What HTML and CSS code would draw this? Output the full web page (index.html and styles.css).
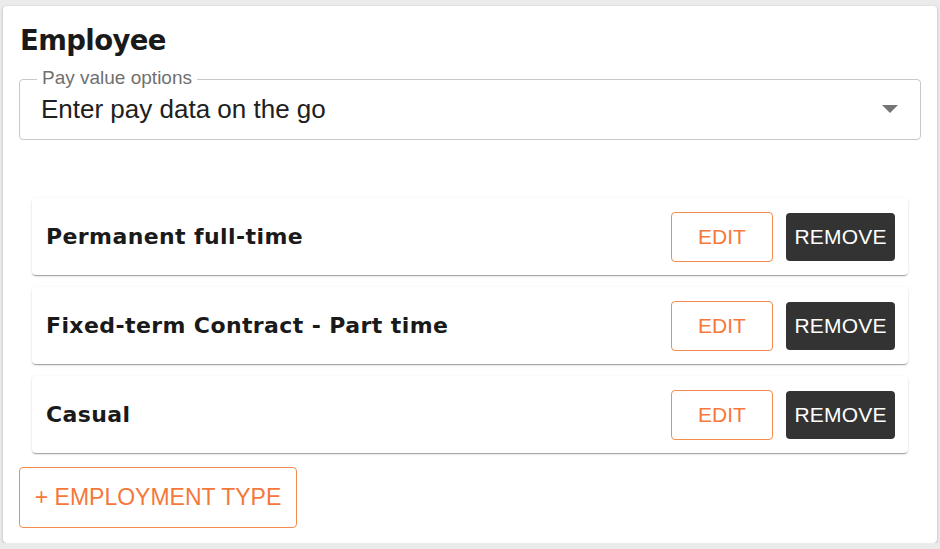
FILE: index.html
```html
<!DOCTYPE html>
<html>
<head>
<meta charset="utf-8">
<link rel="stylesheet" href="styles.css">
</head>
<body>
<div class="card">
  <h1 class="title">Employee</h1>
  <div class="select">
    <span class="select-label">Pay value options</span>
    <span class="select-value">Enter pay data on the go</span>
    <svg class="select-arrow" width="16" height="8" viewBox="0 0 16 8"><path d="M0 0 L8 8 L16 0 Z" fill="#757575"/></svg>
  </div>
  <div class="rows">
    <div class="row">
      <span class="row-name">Permanent full-time</span>
      <div class="actions"><button class="btn-edit">EDIT</button><button class="btn-remove">REMOVE</button></div>
    </div>
    <div class="row">
      <span class="row-name">Fixed-term Contract - Part time</span>
      <div class="actions"><button class="btn-edit">EDIT</button><button class="btn-remove">REMOVE</button></div>
    </div>
    <div class="row">
      <span class="row-name">Casual</span>
      <div class="actions"><button class="btn-edit">EDIT</button><button class="btn-remove">REMOVE</button></div>
    </div>
  </div>
  <button class="btn-add">+ EMPLOYMENT TYPE</button>
</div>
</body>
</html>
```
FILE: styles.css
```css
html, body { margin: 0; padding: 0; }
body {
  background: #ebebeb;
  padding: 6px 3px 0 3px;
  font-family: "Liberation Sans", Arial, sans-serif;
}
.card {
  width: 934px;
  height: 537px;
  box-sizing: border-box;
  background: #fff;
  border-radius: 4px;
  box-shadow: 0 1px 3px rgba(0,0,0,.25);
  padding: 0 16px 15px 16px;
  display: flex;
  flex-direction: column;
}
.title {
  margin: 0;
  padding-top: 17px;
  height: 54px;
  box-sizing: border-box;
  font-family: "DejaVu Sans", Inter, sans-serif;
  font-weight: 700;
  font-size: 27.5px;
  line-height: 34px;
  color: #1a1a1a;
  letter-spacing: -0.6px;
  padding-left: 1px;
}
.select {
  position: relative;
  height: 61px;
  margin-top: 19px;
  border: 1px solid #c8c8c8;
  border-radius: 4px;
  display: flex;
  align-items: center;
  padding-left: 21px;
  box-sizing: border-box;
}
.select-label {
  position: absolute;
  top: -12px;
  left: 17px;
  padding: 0 5px;
  background: #fff;
  font-size: 19px;
  line-height: 20px;
  color: #707070;
}
.select-value {
  font-size: 26px;
  color: #202020;
}
.select-arrow {
  position: absolute;
  right: 22px;
  top: 25px;
}
.rows {
  margin: 58px 13px 0 13px;
  display: flex;
  flex-direction: column;
  gap: 12px;
}
.row {
  height: 77px;
  background: #fff;
  border-radius: 4px;
  box-shadow: 0 2px 1px -1px rgba(0,0,0,.2), 0 1px 1px 0 rgba(0,0,0,.14), 0 1px 3px 0 rgba(0,0,0,.12);
  display: flex;
  align-items: center;
  justify-content: space-between;
  padding: 0 13px 0 14px;
}
.row-name {
  font-family: "DejaVu Sans", Inter, sans-serif;
  font-weight: 700;
  font-size: 22px;
  color: #1a1a1a;
  letter-spacing: 0.4px;
}
.actions {
  display: flex;
  gap: 13px;
  align-items: center;
}
button {
  font-family: "Liberation Sans", Arial, sans-serif;
  cursor: pointer;
  padding: 0;
}
.btn-edit {
  width: 102px;
  height: 50px;
  background: #fff;
  border: 1px solid #f58b4c;
  border-radius: 4px;
  color: #f5783a;
  font-size: 21px;
}
.btn-remove {
  width: 109px;
  height: 48px;
  background: #333;
  border: none;
  border-radius: 4px;
  color: #fff;
  font-size: 21px;
  letter-spacing: 0.2px;
}
.btn-add {
  margin-top: 14px;
  align-self: flex-start;
  width: 278px;
  height: 61px;
  background: #fff;
  border: 1px solid #f58b4c;
  border-radius: 4px;
  color: #f5783a;
  font-size: 23px;
}
```
